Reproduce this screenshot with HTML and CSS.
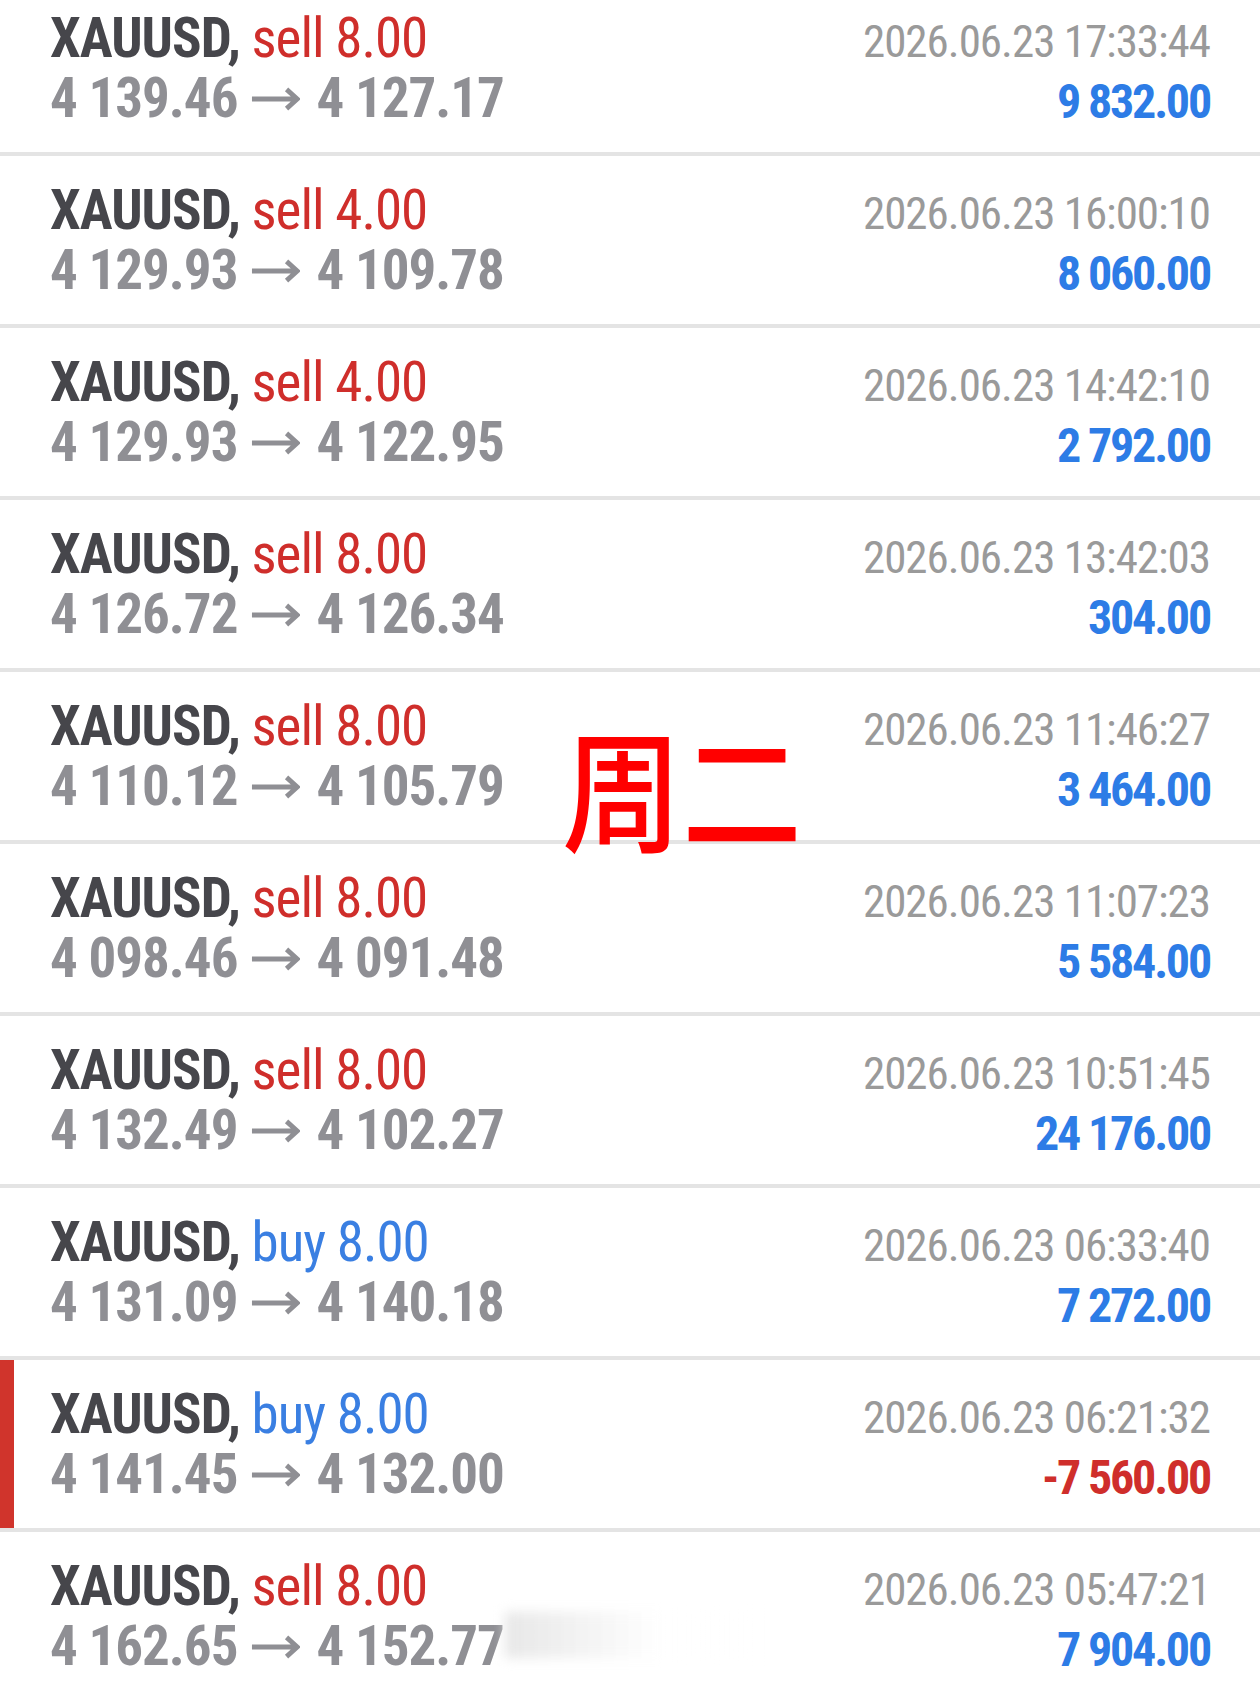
FILE: index.html
```html
<!DOCTYPE html>
<html lang="zh">
<head>
    <meta charset="UTF-8">
    <meta name="viewport" content="width=device-width, initial-scale=1.0">
    <title>History</title>
    <link rel="stylesheet" href="styles.css">
</head>
<body>
    <div class="history">
        <div class="deal">
            <div class="deal-main">
                <div class="deal-title"><span class="symbol">XAUUSD,</span> <span class="sell">sell 8.00</span></div>
                <div class="deal-prices">4 139.46<svg class="arrow" viewBox="0 0 51 24"><path d="M1 12H48M37 2l11 10-11 10"/></svg>4 127.17</div>
            </div>
            <div class="deal-side">
                <div class="deal-time">2026.06.23 17:33:44</div>
                <div class="deal-profit">9 832.00</div>
            </div>
        </div>
        <div class="deal">
            <div class="deal-main">
                <div class="deal-title"><span class="symbol">XAUUSD,</span> <span class="sell">sell 4.00</span></div>
                <div class="deal-prices">4 129.93<svg class="arrow" viewBox="0 0 51 24"><path d="M1 12H48M37 2l11 10-11 10"/></svg>4 109.78</div>
            </div>
            <div class="deal-side">
                <div class="deal-time">2026.06.23 16:00:10</div>
                <div class="deal-profit">8 060.00</div>
            </div>
        </div>
        <div class="deal">
            <div class="deal-main">
                <div class="deal-title"><span class="symbol">XAUUSD,</span> <span class="sell">sell 4.00</span></div>
                <div class="deal-prices">4 129.93<svg class="arrow" viewBox="0 0 51 24"><path d="M1 12H48M37 2l11 10-11 10"/></svg>4 122.95</div>
            </div>
            <div class="deal-side">
                <div class="deal-time">2026.06.23 14:42:10</div>
                <div class="deal-profit">2 792.00</div>
            </div>
        </div>
        <div class="deal">
            <div class="deal-main">
                <div class="deal-title"><span class="symbol">XAUUSD,</span> <span class="sell">sell 8.00</span></div>
                <div class="deal-prices">4 126.72<svg class="arrow" viewBox="0 0 51 24"><path d="M1 12H48M37 2l11 10-11 10"/></svg>4 126.34</div>
            </div>
            <div class="deal-side">
                <div class="deal-time">2026.06.23 13:42:03</div>
                <div class="deal-profit">304.00</div>
            </div>
        </div>
        <div class="deal">
            <div class="deal-main">
                <div class="deal-title"><span class="symbol">XAUUSD,</span> <span class="sell">sell 8.00</span></div>
                <div class="deal-prices">4 110.12<svg class="arrow" viewBox="0 0 51 24"><path d="M1 12H48M37 2l11 10-11 10"/></svg>4 105.79</div>
            </div>
            <div class="deal-side">
                <div class="deal-time">2026.06.23 11:46:27</div>
                <div class="deal-profit">3 464.00</div>
            </div>
        </div>
        <div class="deal">
            <div class="deal-main">
                <div class="deal-title"><span class="symbol">XAUUSD,</span> <span class="sell">sell 8.00</span></div>
                <div class="deal-prices">4 098.46<svg class="arrow" viewBox="0 0 51 24"><path d="M1 12H48M37 2l11 10-11 10"/></svg>4 091.48</div>
            </div>
            <div class="deal-side">
                <div class="deal-time">2026.06.23 11:07:23</div>
                <div class="deal-profit">5 584.00</div>
            </div>
        </div>
        <div class="deal">
            <div class="deal-main">
                <div class="deal-title"><span class="symbol">XAUUSD,</span> <span class="sell">sell 8.00</span></div>
                <div class="deal-prices">4 132.49<svg class="arrow" viewBox="0 0 51 24"><path d="M1 12H48M37 2l11 10-11 10"/></svg>4 102.27</div>
            </div>
            <div class="deal-side">
                <div class="deal-time">2026.06.23 10:51:45</div>
                <div class="deal-profit">24 176.00</div>
            </div>
        </div>
        <div class="deal">
            <div class="deal-main">
                <div class="deal-title"><span class="symbol">XAUUSD,</span> <span class="buy">buy 8.00</span></div>
                <div class="deal-prices">4 131.09<svg class="arrow" viewBox="0 0 51 24"><path d="M1 12H48M37 2l11 10-11 10"/></svg>4 140.18</div>
            </div>
            <div class="deal-side">
                <div class="deal-time">2026.06.23 06:33:40</div>
                <div class="deal-profit">7 272.00</div>
            </div>
        </div>
        <div class="deal deal-selected">
            <div class="deal-main">
                <div class="deal-title"><span class="symbol">XAUUSD,</span> <span class="buy">buy 8.00</span></div>
                <div class="deal-prices">4 141.45<svg class="arrow" viewBox="0 0 51 24"><path d="M1 12H48M37 2l11 10-11 10"/></svg>4 132.00</div>
            </div>
            <div class="deal-side">
                <div class="deal-time">2026.06.23 06:21:32</div>
                <div class="deal-profit loss">-7 560.00</div>
            </div>
        </div>
        <div class="deal">
            <div class="deal-main">
                <div class="deal-title"><span class="symbol">XAUUSD,</span> <span class="sell">sell 8.00</span></div>
                <div class="deal-prices">4 162.65<svg class="arrow" viewBox="0 0 51 24"><path d="M1 12H48M37 2l11 10-11 10"/></svg>4 152.77</div>
            </div>
            <div class="deal-side">
                <div class="deal-time">2026.06.23 05:47:21</div>
                <div class="deal-profit">7 904.00</div>
            </div>
        </div>

        <!-- annotation stamped on top of the list -->
        <div class="day-label">周二</div>
        <div class="smudge"></div>
    </div>
</body>
</html>
```
FILE: styles.css
```css
/* Page */
body {
    margin: 0;
    background-color: #fff;
    font-family: "Roboto Condensed", Roboto, "Liberation Sans", sans-serif;
    overflow: hidden;
}

.history {
    position: relative;
    margin-top: -16px;
}

/* Deal rows */
.deal {
    display: flex;
    justify-content: space-between;
    height: 168px;
    padding: 0 50px;
    border-bottom: 4px solid #e4e4e4;
}

.deal-selected {
    box-shadow: inset 14px 0 0 #d0342c;
}

.deal-main {
    padding-top: 24px;
}

.deal-title,
.deal-prices {
    font-size: 55px;
    line-height: 60px;
    letter-spacing: -1px;
    white-space: nowrap;
}

.symbol {
    font-weight: 700;
    color: #46464b;
}

.sell {
    color: #cf2e2b;
}

.buy {
    color: #3a7fe2;
}

.deal-prices {
    font-weight: 700;
    color: #8f8f94;
}

.arrow {
    width: 49px;
    height: 24px;
    margin: 0 16px 0 14px;
    vertical-align: 6px;
}

.arrow path {
    fill: none;
    stroke: #8f8f94;
    stroke-width: 5;
}

.deal-side {
    padding-top: 28px;
    text-align: right;
}

.deal-time {
    font-size: 45px;
    line-height: 60px;
    letter-spacing: -1px;
    color: #9a9a9a;
    white-space: nowrap;
}

.deal-profit {
    font-size: 48px;
    line-height: 60px;
    letter-spacing: -2.2px;
    font-weight: 700;
    color: #2d7ce6;
}

.deal-profit.loss {
    color: #cf2e2b;
}

/* Overlays */
.day-label {
    position: absolute;
    top: 735px;
    left: 562px;
    font-family: "Noto Sans CJK SC", sans-serif;
    font-size: 120px;
    font-weight: 500;
    line-height: 1;
    color: #ff0000;
    transform: scaleY(1.1);
    transform-origin: top left;
}

.smudge {
    position: absolute;
    top: 1628px;
    left: 505px;
    width: 260px;
    height: 46px;
    background: linear-gradient(90deg, rgba(230, 230, 230, 0.95), rgba(255, 255, 255, 0.9) 60%, rgba(255, 255, 255, 0));
    filter: blur(6px);
}
```
